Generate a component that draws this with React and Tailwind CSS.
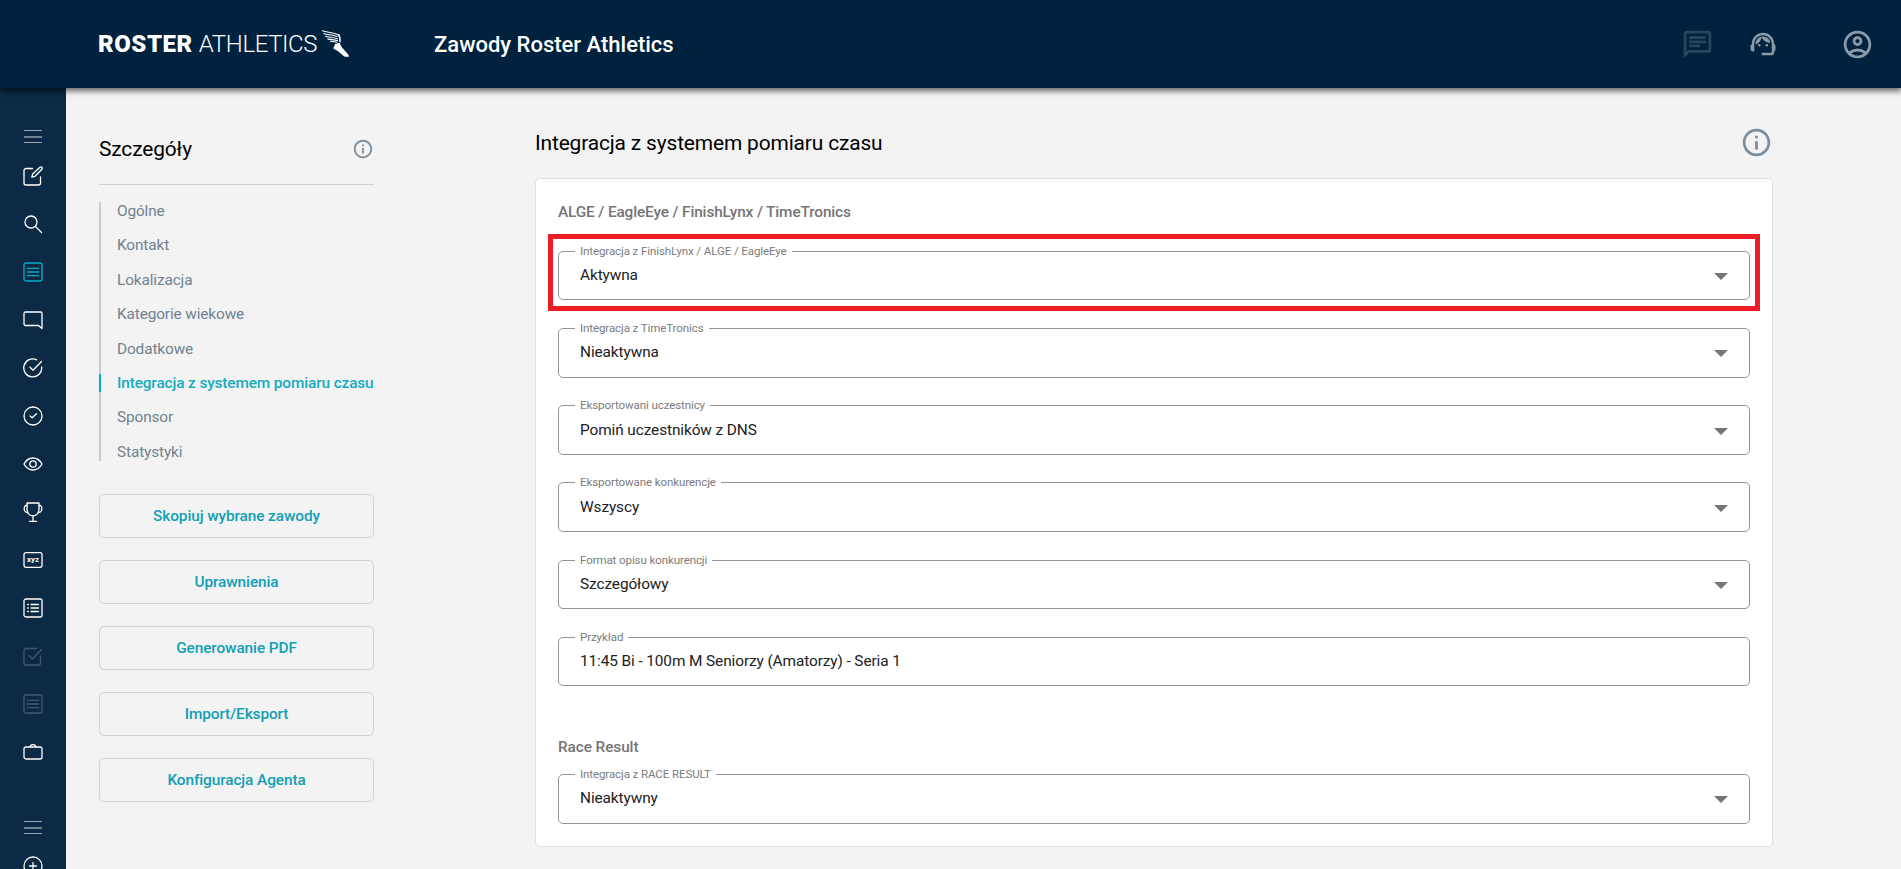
import React from "react";
import { MdOutlineSupportAgent, MdOutlineChat, MdOutlineAccountCircle, MdInfoOutline } from "react-icons/md";

const SideIcon = ({ dim, active, children }) => (
  <a
    className={
      "flex h-12 w-full items-center justify-center " +
      (dim ? "text-[#45596e]" : active ? "text-[#00afc4]" : "text-white")
    }
  >
    <svg width="20" height="20" viewBox="0 0 20 20" fill="none" stroke="currentColor" strokeWidth="1.3" strokeLinecap="round" strokeLinejoin="round">
      {children}
    </svg>
  </a>
);

const Burger = () => (
  <div className="flex h-[13px] w-[18px] shrink-0 flex-col justify-between">
    <span className="h-px bg-[#98a4b0]" />
    <span className="h-[2px] bg-[#6f8091]" />
    <span className="h-px bg-[#98a4b0]" />
  </div>
);

const listIcon = (
  <>
    <rect x="1" y="1" width="18" height="18" rx="2" />
    <path d="M4.3 6.3h11.4M4.3 10h11.4M4.3 13.7h11.4" />
  </>
);

function Sidebar() {
  return (
    <aside className="flex w-[66px] shrink-0 flex-col items-center overflow-hidden bg-[#0c2a45] pt-[42px]">
      <Burger />
      <div className="mt-[9px] flex w-full shrink-0 flex-col">
        <SideIcon>
          <path d="M9.5 2.5H3a2 2 0 0 0-2 2V17a2 2 0 0 0 2 2h12.5a2 2 0 0 0 2-2v-6" />
          <path d="M8.8 11.2l.9-3.2 7.3-6.7a1.3 1.3 0 0 1 1.9 1.9L12 10.3z" />
        </SideIcon>
        <SideIcon>
          <circle cx="8" cy="8" r="6" />
          <path d="M12.5 12.5l6 6" />
        </SideIcon>
        <SideIcon active>{listIcon}</SideIcon>
        <SideIcon>
          <path d="M2.5 2h15A1.5 1.5 0 0 1 19 3.5v15l-3.5-3h-13A1.5 1.5 0 0 1 1 14V3.500A1.5 1.5 0 0 1 2.500 2z" />
        </SideIcon>
        <SideIcon>
          <path d="M18.7 9a9 9 0 1 1-5-7.2" />
          <path d="M7 9.3l3 3 8.5-8.8" />
        </SideIcon>
        <SideIcon>
          <circle cx="10" cy="10" r="9" />
          <path d="M7 10l2.2 1.800 4.300-4" />
        </SideIcon>
        <SideIcon>
          <path d="M1 10c2-3.700 5.200-6 9-6s7 2.300 9 6c-2 3.700-5.200 6-9 6s-7-2.300-9-6z" />
          <circle cx="10" cy="10" r="3.2" />
        </SideIcon>
        <SideIcon>
          <path d="M4 1h12v6c0 4-2.500 6.500-6 7-3.500-.5-6-3-6-7zM10 14v5M6.500 19.300h7" />
          <path d="M4 3.500H2.500C.5 5 .8 9 3 10.300h1.500M16 3.500h1.500c2 1.500 1.700 5.500-.5 6.800h-1.500" />
        </SideIcon>
        <SideIcon>
          <rect x="1" y="2.700" width="18" height="14.600" rx="2" />
          <text x="10" y="11.5" textAnchor="middle" fontSize="7.8" fontWeight="700" fill="currentColor" stroke="none">
            xyz
          </text>
        </SideIcon>
        <SideIcon>
          <rect x="1" y="1" width="18" height="18" rx="2" />
          <path d="M8 6.500h7.500M8 10h7.500M8 13.500h7.500M4.700 6.500h.6M4.700 10h.6M4.700 13.500h.6" />
        </SideIcon>
        <SideIcon dim>
          <path d="M13.5 2.500H3a2 2 0 0 0-2 2V17a2 2 0 0 0 2 2h12.500a2 2 0 0 0 2-2v-7" />
          <path d="M6 9.500l3.500 3.500 9-9.500" />
        </SideIcon>
        <SideIcon dim>{listIcon}</SideIcon>
        <SideIcon>
          <rect x="1" y="5" width="18" height="12" rx="2" />
          <path d="M7.200 5a2.800 2.300 0 0 1 5.600 0" />
        </SideIcon>
      </div>
      <div className="mt-[45px] shrink-0">
        <Burger />
      </div>
      <div className="mt-2 w-full shrink-0">
        <SideIcon>
          <circle cx="10" cy="10" r="9" />
          <path d="M10 6.500v7M6.500 10h7" />
        </SideIcon>
      </div>
    </aside>
  );
}

function WingedFoot() {
  return (
    <svg className="ml-[5px] mt-[-1px]" width="28" height="28" viewBox="0 0 28 28" fill="none" stroke="white" strokeLinecap="round">
      <path
        d="M.5.800C5 2.500 11 2 17 5M1.800 3.500C6 5 10 4.500 15 6.500M3.500 6.300C7 7.500 10 7 15.500 8.700M5.800 8.900c3 .9 6 .6 9.700 1.700M8.500 11.200c2.500.6 4.500.5 6.500 1"
        strokeWidth="1.1"
      />
      <path d="M16.500 4.800c1.300 1.500 1.700 4 1.500 7" strokeWidth="1.500" />
      <path d="M13 14l4.800-1.200c.9 3.400 3 5.900 6.200 9.200 1.600 1.600 2.800 3 3 4.700h-4.200c-3-1.700-4.600-4.200-7.500-6-1.600-.9-3.300-1.400-4-2.200.3-1.400 1.400-2.500 1.700-4.500z" fill="white" stroke="none" />
    </svg>
  );
}

function Header() {
  return (
    <header className="relative z-10 flex h-[88px] shrink-0 items-center bg-[#00223e] pl-[98px] text-white shadow-[0_2px_6px_1px_rgba(0,0,0,0.6)]">
      <div className="flex w-[336px] items-center">
        <span className="text-[24px] font-black leading-none tracking-[0.55px]">ROSTER</span>
        <span className="ml-[6px] text-[24px] font-light leading-none tracking-[-0.4px]">ATHLETICS</span>
        <WingedFoot />
      </div>
      <h1 className="text-[22px] font-medium">Zawody Roster Athletics</h1>
      <div className="ml-auto flex items-center pr-[27px] text-[#8c9ba9]">
        <MdOutlineChat size={33} className="mr-[34px] text-[#29455d]" />
        <MdOutlineSupportAgent size={30} className="mr-[63px]" />
        <MdOutlineAccountCircle size={33} />
      </div>
    </header>
  );
}

const navItems = [
  "Ogólne",
  "Kontakt",
  "Lokalizacja",
  "Kategorie wiekowe",
  "Dodatkowe",
  "Integracja z systemem pomiaru czasu",
  "Sponsor",
  "Statystyki",
];

const actions = [
  "Skopiuj wybrane zawody",
  "Uprawnienia",
  "Generowanie PDF",
  "Import/Eksport",
  "Konfiguracja Agenta",
];

function DetailsMenu() {
  return (
    <div className="w-[275px] shrink-0">
      <div className="flex h-[97px] items-center justify-between border-b border-[#d0d2d3] pt-[26px]">
        <h2 className="pt-px text-[20.9px] tracking-[-0.12px] text-black">Szczegóły</h2>
        <MdInfoOutline size={22} className="text-[#7d8e9c]" />
      </div>
      <nav className="mt-[17px] flex flex-col gap-[16.4px] bg-[linear-gradient(#c5ccd2,#c5ccd2)] bg-[length:2px_100%] bg-no-repeat">
        {navItems.map((item) => (
          <a
            key={item}
            className={
              "h-[18px] whitespace-nowrap border-l-2 pl-4 text-[15.4px] leading-[18px] tracking-[-0.13px] " +
              (item.startsWith("Integracja")
                ? "border-[#00afc4] font-medium text-[#15acc0]"
                : "border-transparent text-[#708290]")
            }
          >
            {item}
          </a>
        ))}
      </nav>
      <div className="mt-[33px] flex flex-col gap-[22px]">
        {actions.map((label) => (
          <button
            key={label}
            className="h-11 rounded-[5px] border border-[#d2d3d4] pt-[2px] text-[15.4px] font-medium tracking-[-0.1px] text-[#119fb5]"
          >
            {label}
          </button>
        ))}
      </div>
    </div>
  );
}

function Field({ label, value, select = true }) {
  return (
    <fieldset className="h-[56.65px] min-w-0 rounded-[5px] border border-[#949494] pl-4 pr-[21px]">
      <legend className="h-[15px] px-[5px] text-[11.55px] leading-[15px] tracking-[-0.11px] text-[#7c7c7c]">{label}</legend>
      <div className="flex h-[34px] items-center justify-between pl-[5px] text-[15.4px] tracking-[-0.1px] text-[#212121]">
        <span>{value}</span>
        {select && (
          <svg className="mt-[2px]" width="14" height="7" viewBox="0 0 14 7">
            <path d="M0 0h14L7 7z" fill="#757575" />
          </svg>
        )}
      </div>
    </fieldset>
  );
}

const fields = [
  { label: "Integracja z TimeTronics", value: "Nieaktywna" },
  { label: "Eksportowani uczestnicy", value: "Pomiń uczestników z DNS" },
  { label: "Eksportowane konkurencje", value: "Wszyscy" },
  { label: "Format opisu konkurencji", value: "Szczegółowy" },
  { label: "Przykład", value: "11:45 Bi - 100m M Seniorzy (Amatorzy) - Seria 1", select: false },
];

function App() {
  return (
    <div className="flex h-[869px] w-full flex-col overflow-hidden bg-[#f3f3f3] font-[Roboto,sans-serif]">
      <Header />
      <div className="flex min-h-0 flex-1">
        <Sidebar />
        <main className="flex min-w-0 flex-1 pl-[33px]">
          <DetailsMenu />
          <section className="ml-[161px] w-[1238px]">
            <div className="flex h-[90px] items-center justify-between pt-[19px]">
              <h2 className="pt-[2px] text-[20.9px] tracking-[-0.14px] text-black">Integracja z systemem pomiaru czasu</h2>
              <MdInfoOutline size={33} className="text-[#7d8e9c]" />
            </div>
            <div className="h-[669px] rounded-[5px] border border-[#dfdfdf] bg-white px-[22px]">
              <h3 className="mt-[24px] text-[15.4px] font-medium leading-[18px] tracking-[-0.14px] text-[#757575]">
                ALGE / EagleEye / FinishLynx / TimeTronics
              </h3>
              {/* highlighted integration select */}
              <div className="mx-[-10px] mt-[13px] h-[77px] border-5 border-[#ee1c25] px-[5px] pt-[4.7px]">
                <Field label="Integracja z FinishLynx / ALGE / EagleEye" value="Aktywna" />
              </div>
              <div className="mt-[9.9px] flex flex-col gap-[20.58px]">
                {fields.map((f) => (
                  <Field key={f.label} {...f} />
                ))}
              </div>
              <h3 className="mb-[11px] mt-[51.5px] text-[15.4px] font-medium leading-[18px] tracking-[-0.1px] text-[#757575]">
                Race Result
              </h3>
              <Field label="Integracja z RACE RESULT" value="Nieaktywny" />
            </div>
          </section>
        </main>
      </div>
    </div>
  );
}

export default App;
